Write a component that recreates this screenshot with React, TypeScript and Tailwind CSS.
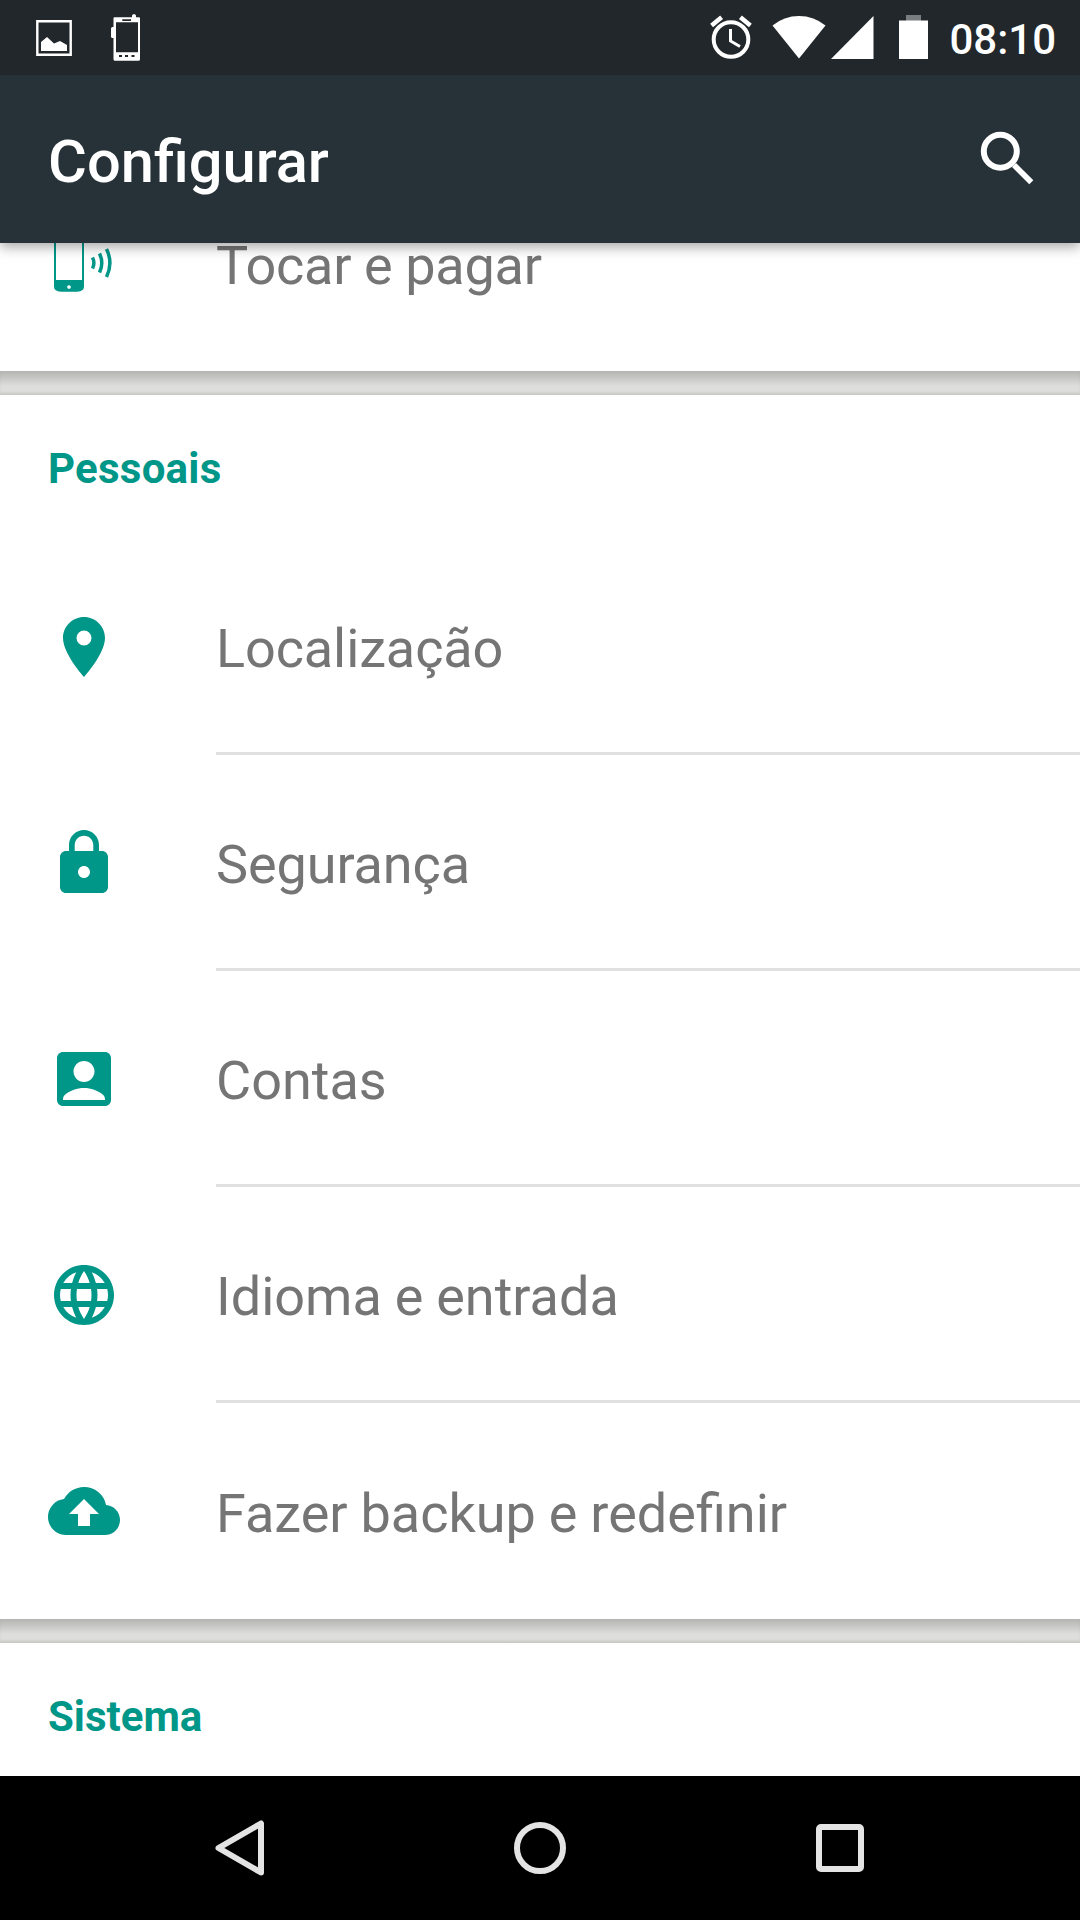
import React from 'react';
import { MdAccountBox, MdBackup, MdLanguage, MdLocationOn, MdLock } from 'react-icons/md';

const TapPayIcon = () => (
  <svg viewBox="0 0 72 72" className="size-[72px]" fill="none">
    <path
      fill="currentColor"
      fillRule="evenodd"
      d="M12 1h18a6 6 0 0 1 6 6v52.500q0 5-7 5.200h-16q-7-.2-7-5.200v-52.500a6 6 0 0 1 6-6zM8 10v43h26v-43zM21 58.200a1.800 1.800 0 1 0 .010 0z"
    />
    <path stroke="currentColor" strokeWidth="3.500" d="M44.500 30.500q2.800 5.500 0 11M51.500 26.500q4.600 9.500 0 19M58.500 22q6.800 14 0 28" />
  </svg>
);

const PictureIcon = () => (
  <svg viewBox="0 0 36 36" className="size-9" fill="none">
    <path stroke="#fff" strokeWidth="2.400" d="M1.300 1.300h33.400v33.400h-33.400z" />
    <path fill="#fff" d="M5 31v-9l6-5 7 6.500 6-2.500 7 4v6z" />
  </svg>
);

const PhoneIcon = () => (
  <svg viewBox="0 0 30 48" className="h-12 w-[30px]">
    <path
      fill="#fff"
      fillRule="evenodd"
      d="M3.500 3.300h17.500v-1.800l1-1.300h2l1 1.300v1.800h3q1 0 1 1v41q0 1.500-1.500 1.500h-23.500q-1.500 0-1.500-1.500v-21.300h-1q-1.500 0-1.500-1.500v-8q0-1.500 1.500-1.500h1v-8.700q0-1 1-1zM5 8.300v30h22v-30zM11.300 5.300v1.700h8.700v-1.700zM8 41v2h3v-2zM14 41v2h3v-2zM20.500 41v2h3v-2z"
    />
  </svg>
);

const AlarmIcon = () => (
  <svg viewBox="0 0 42 44" className="h-11 w-[42px]" fill="none" stroke="#fff">
    <circle cx="21" cy="24.500" r="17.300" strokeWidth="4" />
    <path strokeWidth="3" d="M20.500 14v12l9.500 5.500" />
    <path strokeWidth="4.500" d="M1.600 10.500l10-8.200M40.400 10.500l-10-8.200" />
  </svg>
);

const StatusBar: React.FC = () => (
  <div className="relative z-20 flex h-[75px] shrink-0 items-start bg-[#22272b] pl-9 text-white">
    <div className="mt-5">
      <PictureIcon />
    </div>
    <div className="mt-3.5 ml-[39px]">
      <PhoneIcon />
    </div>
    <div className="mt-[15px] mr-6 ml-auto flex h-[60px] items-start">
      <AlarmIcon />
      <svg viewBox="0 0 54 44" className="ml-5 h-11 w-[54px]">
        <path fill="#fff" d="M.5 10.500Q12 1 27 1t26.500 9.500L27 43.500z" />
      </svg>
      <svg viewBox="0 0 43 44" className="ml-[5px] h-11 w-[43px]">
        <path fill="#fff" d="M42.500 1v43h-42.500z" />
      </svg>
      <svg viewBox="0 0 29 44" className="ml-[25px] h-11 w-[29px]">
        <path fill="#7a7d80" d="M7 0h15v6h-15z" />
        <path fill="#fff" d="M0 5.500h29v38.500h-29z" />
      </svg>
      <span className="mt-px ml-[21px] text-[42px] leading-[48px] font-medium">08:10</span>
    </div>
  </div>
);

const Toolbar: React.FC = () => (
  <header className="relative z-10 flex h-[168px] shrink-0 items-center justify-between bg-[#263238] pr-9 pl-12 text-white shadow-[0_4px_12px_rgba(0,0,0,0.35)]">
    <h1 className="mt-[5px] text-[59.6px] leading-[70px] font-medium">Configurar</h1>
    <svg viewBox="0 0 72 72" className="size-[72px]" fill="none" stroke="#fff">
      <circle cx="28.300" cy="28.300" r="16.500" strokeWidth="6" />
      <path strokeWidth="5.700" d="M42 42l17.300 17.300" />
    </svg>
  </header>
);

interface RowProps {
  icon: React.ReactNode;
  label: string;
  divider?: boolean;
  className?: string;
}

const SettingsRow: React.FC<RowProps> = ({ icon, label, divider = false, className = '' }) => (
  <div className="flex h-[216px] shrink-0 items-center pl-12">
    <div className="w-[168px] text-[#009688]">{icon}</div>
    <div
      className={`flex h-full flex-1 items-center pt-[5px] text-[54px] text-[#757575] [word-spacing:-0.5px] ${
        divider ? 'border-b-[3px] border-[#e0e0e0]' : ''
      } ${className}`}
    >
      {label}
    </div>
  </div>
);

const SectionTitle: React.FC<{ children: React.ReactNode; className?: string }> = ({ children, className = '' }) => (
  <h2 className={`flex h-36 items-center pt-[3px] pl-12 text-[42px] font-bold text-[#009688] ${className}`}>
    {children}
  </h2>
);

const personal: RowProps[] = [
  { icon: <MdLocationOn size={72} />, label: 'Localização', className: 'tracking-[-0.1px]' },
  { icon: <MdLock size={72} />, label: 'Segurança', className: 'tracking-[-0.1px]' },
  { icon: <MdAccountBox size={72} />, label: 'Contas' },
  { icon: <MdLanguage size={72} />, label: 'Idioma e entrada' },
  { icon: <MdBackup size={72} />, label: 'Fazer backup e redefinir' },
];

// Space between two cards, with the shadow of the card above
const CardGap = () => (
  <div className="h-6 shrink-0 bg-linear-to-b from-[#b4b5b3] via-[#dcdcda] via-60% to-[#e0e0de] shadow-[inset_0_-3px_3px_-1px_rgba(0,0,0,0.12)]" />
);

const NavBar: React.FC = () => (
  <nav className="flex h-36 shrink-0 items-center justify-between bg-black px-[204px]">
    <svg viewBox="0 0 72 72" className="size-[72px]" fill="none" stroke="#e4e4e4" strokeWidth="6">
      <path strokeLinejoin="round" d="M57 11.500v49l-42.500-24.500z" />
    </svg>
    <svg viewBox="0 0 72 72" className="size-[72px]" fill="none" stroke="#e4e4e4" strokeWidth="6">
      <circle cx="36" cy="36" r="23" />
    </svg>
    <svg viewBox="0 0 72 72" className="size-[72px]" fill="none" stroke="#e4e4e4" strokeWidth="6">
      <rect x="15" y="15" width="42" height="42" rx="2" />
    </svg>
  </nav>
);

export default function App() {
  return (
    <div className="flex h-[1920px] w-[1080px] flex-col overflow-hidden bg-white font-[Roboto,sans-serif]">
      <StatusBar />
      <Toolbar />
      <main className="flex min-h-0 flex-1 flex-col justify-end overflow-hidden">
        <SettingsRow icon={<TapPayIcon />} label="Tocar e pagar" className="tracking-[-0.2px]" />
        <CardGap />
        <section className="shrink-0">
          <SectionTitle className="tracking-[0.25px]">Pessoais</SectionTitle>
          {personal.map((row, i) => (
            <SettingsRow key={row.label} {...row} divider={i < personal.length - 1} />
          ))}
        </section>
        <CardGap />
        <section className="h-[133px] shrink-0 overflow-hidden">
          <SectionTitle>Sistema</SectionTitle>
        </section>
      </main>
      <NavBar />
    </div>
  );
}
